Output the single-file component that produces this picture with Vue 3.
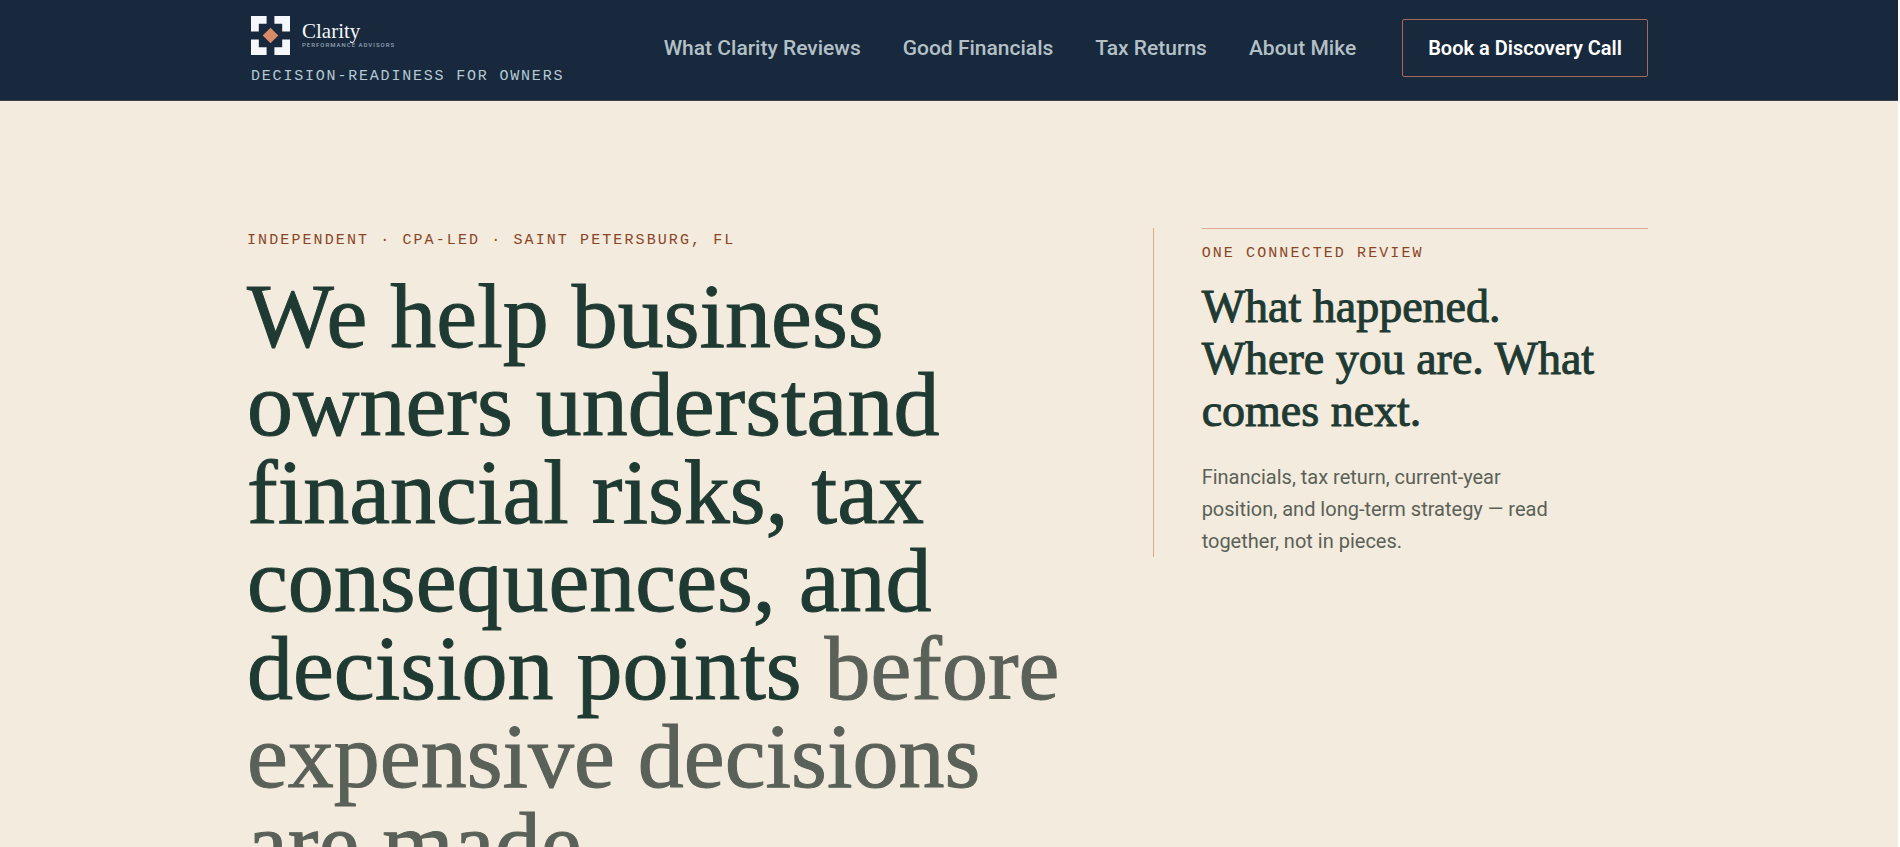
<script setup>
const links = ['What Clarity Reviews', 'Good Financials', 'Tax Returns', 'About Mike']
</script>

<template>
  <div class="page">
    <header class="site-header">
      <div class="container header-row">
        <a href="#" class="brand">
          <span class="logo">
            <svg class="mark" viewBox="0 0 40 40" aria-hidden="true">
              <path d="M0 0H16V8H8V16H0Z M24 0H40V16H32V8H24Z M0 24H8V32H16V40H0Z M32 24H40V40H24V32H32Z" fill="#f5f7fa" />
              <path d="M20 12L28 20L20 28L12 20Z" fill="#d98a66" />
            </svg>
            <span class="wordmark">
              <span class="name">Clarity</span>
              <span class="sub">PERFORMANCE ADVISORS</span>
            </span>
          </span>
          <span class="tagline">DECISION-READINESS FOR OWNERS</span>
        </a>
        <nav class="nav">
          <a v-for="link in links" :key="link" href="#">{{ link }}</a>
          <a href="#" class="cta">Book a Discovery Call</a>
        </nav>
      </div>
    </header>

    <main class="main">
      <div class="container hero">
        <section>
          <p class="eyebrow">INDEPENDENT · CPA-LED · SAINT PETERSBURG, FL</p>
          <h1>
            We help business owners understand financial risks, tax consequences, and decision points
            <span class="muted">before expensive decisions are made.</span>
          </h1>
        </section>
        <aside class="review">
          <div class="review-inner">
            <p class="eyebrow">ONE CONNECTED REVIEW</p>
            <h2>What happened. Where you are. What comes next.</h2>
            <p class="copy">Financials, tax return, current-year position, and long-term strategy — read together, not in pieces.</p>
          </div>
        </aside>
      </div>
    </main>
  </div>
</template>

<style>
html {
  background: #f3ebdd;
}
body {
  margin: 0;
  overflow: hidden;
}
</style>

<style scoped>
.page {
  height: 100vh;
  overflow: hidden;
  border-right: 2px solid #ffffff;
  background: #f3ebdd;
  color: #1e3a32;
  font-family: Roboto, "Liberation Sans", sans-serif;
}
.container {
  box-sizing: border-box;
  width: 100%;
  max-width: 1401px;
  margin: 0 auto;
}
.site-header {
  background: #18283d;
  border-bottom: 1px solid #3b4750;
  padding-right: 3px;
}
.header-row {
  display: flex;
  justify-content: space-between;
  height: 100px;
}
.brand {
  display: flex;
  flex-direction: column;
  padding: 16px 0 0 4px;
  text-decoration: none;
}
.logo {
  display: flex;
  gap: 12px;
  height: 49px;
}
.mark {
  width: 39px;
  height: 39px;
}
.wordmark {
  display: flex;
  flex-direction: column;
  padding-top: 4px;
}
.name {
  font: 21px/22px "Liberation Serif", serif;
  color: #f5f7fa;
}
.sub {
  font: 500 6px/6px Roboto, sans-serif;
  letter-spacing: 1px;
  color: #93a3b3;
}
.tagline {
  font: 15px/24px "Liberation Mono", monospace;
  letter-spacing: 0.12em;
  color: #b4cad3;
}
.nav {
  display: flex;
  align-items: center;
  gap: 42px;
  padding-bottom: 4px;
}
.nav a {
  color: #b3c1c7;
  font-size: 21px;
  line-height: 24px;
  font-weight: 500;
  text-decoration: none;
  white-space: nowrap;
}
.nav .cta {
  margin-left: 4px;
  padding: 16px 25px;
  border: 1px solid #a66a5b;
  border-radius: 2px;
  color: #ffffff;
  font-size: 20px;
  font-weight: 600;
}
.main {
  padding: 127px 3px 0 0;
}
.hero {
  display: grid;
  grid-template-columns: 5fr 3fr;
  column-gap: 80px;
  align-items: start;
}
.eyebrow {
  margin: 0;
  font: 15px/26px "Liberation Mono", monospace;
  letter-spacing: 0.14em;
  color: #8a4527;
}
h1 {
  margin: 18px 0 0;
  font: 92px/88px "Liberation Serif", serif;
  -webkit-text-stroke: 1px currentColor;
}
.muted {
  color: #5a6158;
}
.review {
  border-left: 1px solid #d9ab90;
  padding-left: 48px;
}
.review-inner {
  border-top: 1px solid #d9ab90;
  padding-top: 12px;
}
h2 {
  max-width: 410px;
  margin: 14px 0 0;
  font: 46px/52px "Liberation Serif", serif;
  -webkit-text-stroke: 1px currentColor;
}
.copy {
  max-width: 370px;
  margin: 24px 0 0;
  font-size: 20px;
  line-height: 32px;
  color: #5a6158;
}
</style>
